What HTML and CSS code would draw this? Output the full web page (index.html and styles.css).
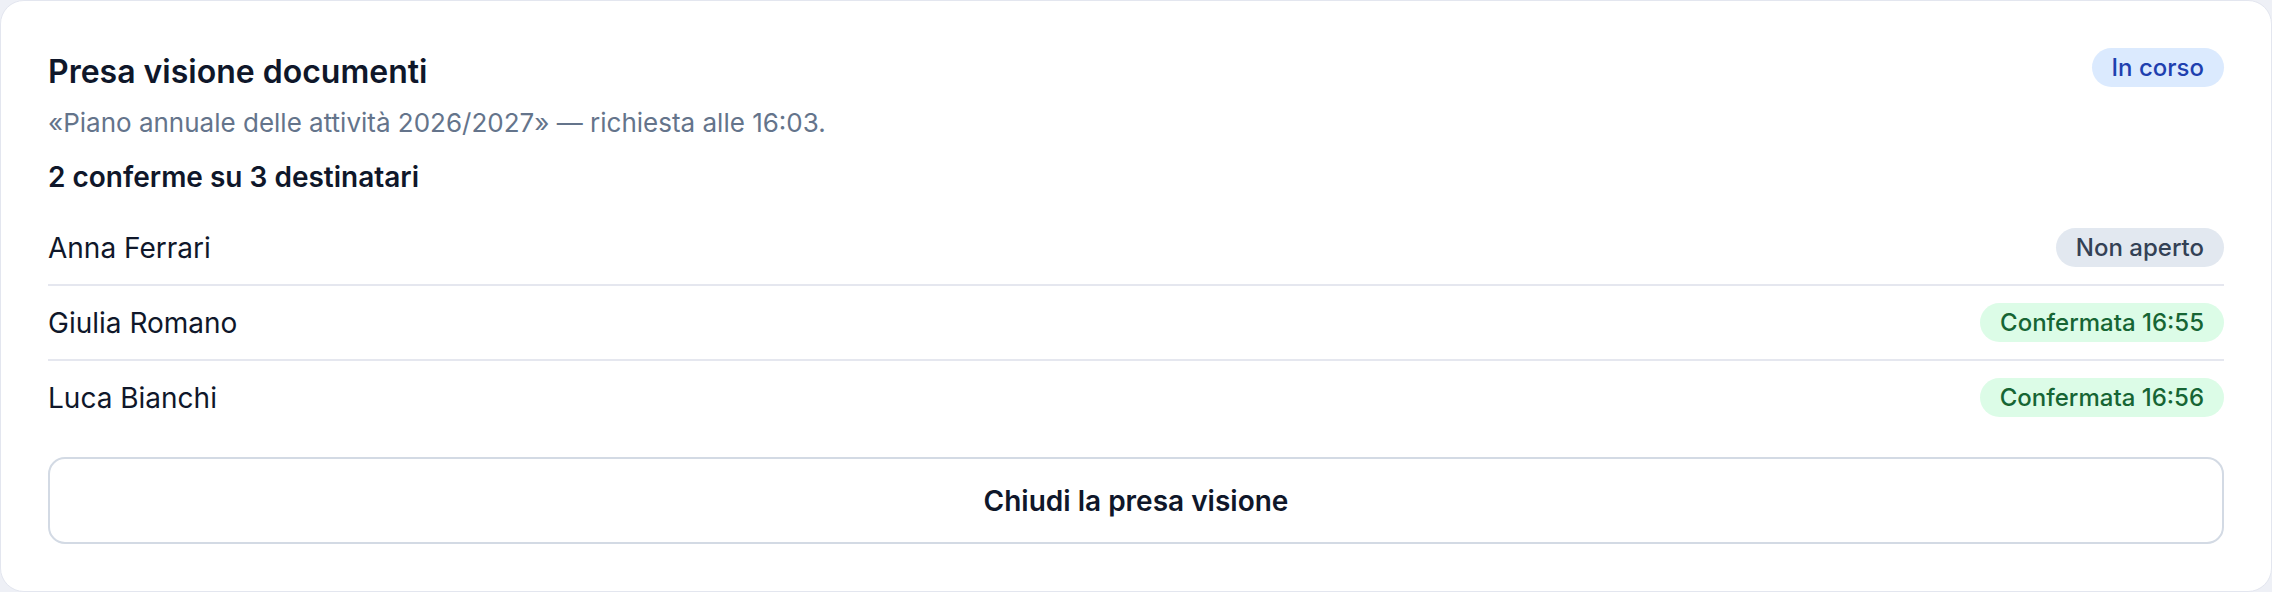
FILE: index.html
```html
<!DOCTYPE html>
<html lang="it">
<head>
    <meta charset="UTF-8">
    <meta name="viewport" content="width=device-width, initial-scale=1.0">
    <title>Presa visione documenti</title>
    <link rel="stylesheet" href="styles.css">
</head>
<body>
    <!-- Card presa visione -->
    <section class="card">
        <div class="card-header">
            <h2 class="card-title">Presa visione documenti</h2>
            <span class="badge badge-blue">In corso</span>
        </div>
        <p class="card-subtitle">«Piano annuale delle attività 2026/2027» — richiesta alle 16:03.</p>
        <p class="card-count">2 conferme su 3 destinatari</p>

        <!-- Destinatari -->
        <ul class="recipients">
            <li class="recipient">
                <span class="recipient-name">Anna Ferrari</span>
                <span class="badge badge-gray">Non aperto</span>
            </li>
            <li class="recipient">
                <span class="recipient-name">Giulia Romano</span>
                <span class="badge badge-green">Confermata 16:55</span>
            </li>
            <li class="recipient">
                <span class="recipient-name">Luca Bianchi</span>
                <span class="badge badge-green">Confermata 16:56</span>
            </li>
        </ul>

        <button class="btn-close" type="button">Chiudi la presa visione</button>
    </section>
</body>
</html>
```

FILE: styles.css
```css
body {
    margin: 0;
    background: #eef0f6;
    font-family: Inter, "Noto Sans", sans-serif;
    color: #0f172a;
}

.card {
    box-sizing: border-box;
    height: 592px;
    padding: 47px;
    background: #fff;
    border: 1px solid #e3e6ef;
    border-radius: 24px;
}

.card-header {
    display: flex;
    justify-content: space-between;
    align-items: flex-start;
}

.card-title {
    margin: 0;
    font-size: 32px;
    font-weight: 600;
    line-height: 48px;
}

.card-subtitle {
    margin: 11px 0 0;
    font-size: 26px;
    line-height: 32px;
    color: #64748b;
}

.card-count {
    margin: 22px 0 0;
    font-size: 28px;
    font-weight: 600;
    line-height: 32px;
}

.recipients {
    list-style: none;
    margin: 18px 0 0;
    padding: 0;
}

.recipient {
    display: flex;
    justify-content: space-between;
    align-items: center;
    padding: 17px 0;
    border-bottom: 2px solid #e5e7ef;
}

.recipient:last-child {
    border-bottom: none;
}

.recipient-name {
    font-size: 28px;
}

.badge {
    display: inline-flex;
    align-items: center;
    height: 39px;
    padding: 0 20px;
    border-radius: 999px;
    font-size: 24px;
    font-weight: 500;
}

.badge-blue {
    background: #dbeafe;
    color: #1e40af;
}

.badge-gray {
    background: #e2e8f0;
    color: #334155;
}

.badge-green {
    background: #dcfce7;
    color: #166534;
}

.btn-close {
    display: block;
    width: 100%;
    height: 87px;
    margin-top: 23px;
    background: #fff;
    border: 2px solid #d3dae4;
    border-radius: 17px;
    font-family: inherit;
    font-size: 28px;
    font-weight: 600;
    color: #0f172a;
}
```
